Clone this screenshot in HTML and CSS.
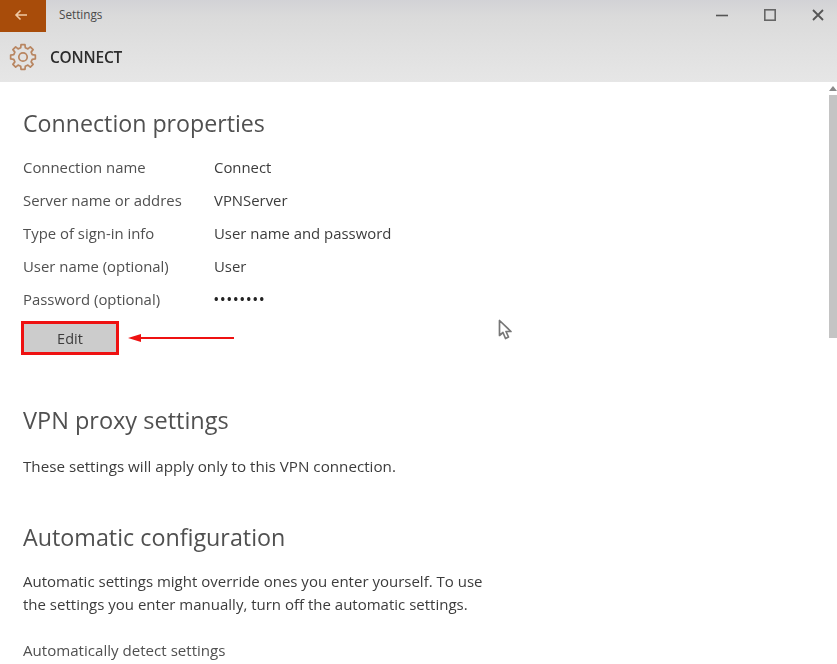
FILE: index.html
```html
<!DOCTYPE html>
<html lang="en">
<head>
<meta charset="utf-8">
<title>Settings</title>
<link rel="stylesheet" href="styles.css">
</head>
<body>
<div class="window">
  <header class="chrome">
    <div class="titlebar">
      <div class="back">
        <svg width="14" height="12" viewBox="0 0 14 12"><path d="M13 6H2M6.500 1.500L2 6l4.500 4.500" fill="none" stroke="#f0c9a4" stroke-width="1.600"/></svg>
      </div>
      <span class="app-title">Settings</span>
      <div class="controls">
        <svg class="ctl" width="12" height="12" viewBox="0 0 12 12"><path d="M0 6.500H12" stroke="#555" stroke-width="1.600"/></svg>
        <svg class="ctl" width="12" height="12" viewBox="0 0 12 12"><rect x="0.800" y="0.800" width="10.400" height="10.400" fill="none" stroke="#666" stroke-width="1.600"/></svg>
        <svg class="ctl" width="12" height="12" viewBox="0 0 12 12"><path d="M1 1L11 11M11 1L1 11" stroke="#555" stroke-width="1.800"/></svg>
      </div>
    </div>
    <div class="pagebar">
      <svg class="gear" width="28" height="28" viewBox="0 0 28 28">
        <polygon points="11.7,4.78 12.04,1.65 15.96,1.65 16.3,4.78 18.89,5.86 21.35,3.89 24.11,6.65 22.14,9.11 23.22,11.7 26.35,12.04 26.35,15.96 23.22,16.3 22.14,18.89 24.11,21.35 21.35,24.11 18.89,22.14 16.3,23.22 15.96,26.35 12.04,26.35 11.7,23.22 9.11,22.14 6.65,24.11 3.89,21.35 5.86,18.89 4.78,16.3 1.65,15.96 1.65,12.04 4.78,11.7 5.86,9.11 3.89,6.65 6.65,3.89 9.11,5.86" fill="none" stroke="#b88560" stroke-width="1.700" stroke-linejoin="round"/>
        <circle cx="14" cy="14" r="4.200" fill="none" stroke="#b88560" stroke-width="1.700"/>
      </svg>
      <span class="page-title">CONNECT</span>
    </div>
  </header>
  <main class="content">
    <h2 class="h-first">Connection properties</h2>
    <dl class="props">
      <div class="row"><dt>Connection name</dt><dd>Connect</dd></div>
      <div class="row"><dt>Server name or addres</dt><dd>VPNServer</dd></div>
      <div class="row"><dt>Type of sign-in info</dt><dd>User name and password</dd></div>
      <div class="row"><dt>User name (optional)</dt><dd>User</dd></div>
      <div class="row"><dt>Password (optional)</dt><dd class="dots">••••••••</dd></div>
    </dl>
    <div class="edit-row">
      <button class="edit">Edit</button>
      <svg class="arrow" width="106" height="10" viewBox="0 0 106 10"><path d="M0 5L13 1V3.900L106 4.100V6.100L13 6.100V9Z" fill="#ee1111"/></svg>
    </div>
    <h2 class="h-proxy">VPN proxy settings</h2>
    <p class="note">These settings will apply only to this VPN connection.</p>
    <h2 class="h-auto">Automatic configuration</h2>
    <p class="para">Automatic settings might override ones you enter yourself. To use<br>the settings you enter manually, turn off the automatic settings.</p>
    <p class="detect">Automatically detect settings</p>
  </main>
  <div class="scrollbar">
    <svg class="scroll-up" width="8" height="5" viewBox="0 0 8 5"><path d="M4 0L8 5H0Z" fill="#8a8a8a"/></svg>
    <span class="thumb"></span>
  </div>
  <svg class="cursor" width="16" height="22" viewBox="0 0 16 22"><path d="M1.500 1.500V16.500L5 13.500L7.500 19.500L10.500 18L8 12.500H13Z" fill="#fff" stroke="#777" stroke-width="1.700" stroke-linejoin="round"/></svg>
</div>
</body>
</html>
```
FILE: styles.css
```css
* { box-sizing: border-box; }
html, body { margin: 0; height: 100%; }
body { background: #fff; font-family: "Open Sans", "Noto Sans", sans-serif; overflow: hidden; }
.window { position: relative; width: 837px; height: 664px; overflow: hidden; filter: blur(0.45px); }
.chrome { height: 82px; background: linear-gradient(#d2d2d6 0, #dadada 15px, #e0e0e0 45px, #e6e6e6 82px); }
.titlebar { display: flex; align-items: center; height: 32px; }
.back { width: 46px; height: 32px; background: #a84c0a; display: flex; align-items: center; justify-content: center; margin-right: 13px; }
.back svg { margin: 0 4px 2px 0; }
.app-title { font-size: 11.700px; color: #4a4a4a; margin-bottom: 4px; }
.controls { margin-left: auto; display: flex; gap: 36px; padding: 0 13px 3px 0; }
.pagebar { display: flex; align-items: center; height: 50px; padding: 0 0 1px 9px; }
.page-title { margin-left: 13px; font-size: 15.500px; font-weight: 600; color: #2c2c2c; letter-spacing: -.2px; }
.content { padding: 0 0 0 23px; color: #3c3c3c; }
h2 { margin: 0; font-weight: 400; font-size: 23.200px; line-height: 30px; color: #505050; }
.h-first { margin-top: 26px; }
.props { margin: 12px 0 0; }
.row { display: flex; height: 33px; align-items: center; font-size: 14.900px; }
dt { width: 191px; color: #505050; }
dd { margin: 0; color: #3c3c3c; }
.dots { font-size: 12px; letter-spacing: 2px; color: #222; font-weight: 700; padding-top: 2px; }
.edit-row { display: flex; align-items: center; margin: 6px 0 0 -2px; }
.edit { width: 98px; height: 34px; border: 3px solid #ee1111; background: #cccccc; font: 14.500px "Open Sans", sans-serif; color: #3c3c3c; padding: 0; }
.arrow { margin-left: 9px; }
.h-proxy { margin-top: 50px; font-size: 23.500px; }
.note { margin: 21px 0 0; font-size: 15.200px; line-height: 20px; }
.h-auto { margin-top: 46px; font-size: 23.300px; }
.para { margin: 18px 0 0; font-size: 15px; line-height: 23px; }
.detect { margin: 24px 0 0; font-size: 15.100px; line-height: 20px; color: #505050; }
.scrollbar { position: absolute; right: 0; top: 82px; bottom: 0; width: 8px; }
.scroll-up { position: absolute; top: 4px; left: 0; }
.thumb { position: absolute; top: 13px; left: 0; right: 0; height: 243px; background: #c4c4c4; }
.cursor { position: absolute; left: 498px; top: 319px; }
```
